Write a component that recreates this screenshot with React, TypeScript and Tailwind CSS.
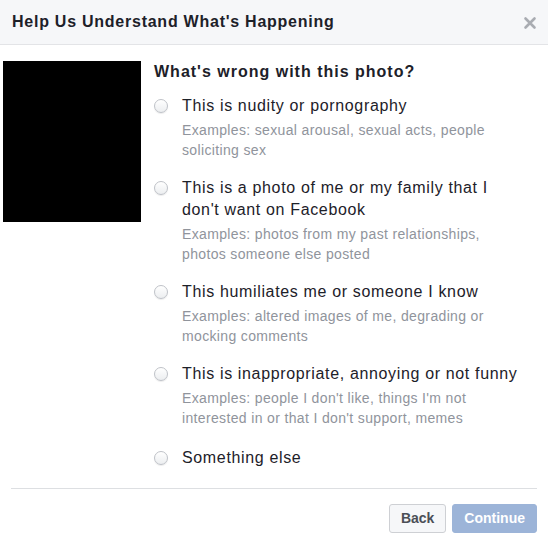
const options = [
  {
    label: "This is nudity or pornography",
    examples: "Examples: sexual arousal, sexual acts, people soliciting sex",
  },
  {
    label: "This is a photo of me or my family that I don't want on Facebook",
    examples: "Examples: photos from my past relationships, photos someone else posted",
  },
  {
    label: "This humiliates me or someone I know",
    examples: "Examples: altered images of me, degrading or mocking comments",
  },
  {
    label: "This is inappropriate, annoying or not funny",
    examples:
      "Examples: people I don't like, things I'm not interested in or that I don't support, memes",
  },
  { label: "Something else", examples: "" },
];

function Radio() {
  return (
    <span className="mt-[4px] block h-[14px] w-[14px] shrink-0 rounded-full border border-[#bfc2c8] bg-gradient-to-b from-white to-[#eceef0] shadow-[0_1px_1px_rgba(0,0,0,0.08)]" />
  );
}

export default function App() {
  return (
    <div className="h-[534px] w-[548px] overflow-hidden bg-white font-['Liberation_Sans',Arial,sans-serif] text-[#1d2129]">
      <div className="flex h-[45px] items-center justify-between border-b border-[#e3e4e7] bg-[#f6f7f9] pl-[12px] pr-[11px]">
        <h2 className="text-[16px] font-bold leading-5 tracking-[0.75px]">
          Help Us Understand What's Happening
        </h2>
        <svg width="14" height="14" viewBox="0 0 14 14" className="mt-[1px]">
          <path d="M2.5 2.5 L11.5 11.5 M11.5 2.5 L2.5 11.5" stroke="#a9acb2" strokeWidth="2.6" strokeLinecap="round" />
        </svg>
      </div>

      <div className="flex pt-[16px]">
        <div className="ml-[3px] h-[161px] w-[138px] shrink-0 bg-black" />
        <div className="ml-[13px] flex-1 pr-[12px]">
          <h3 className="text-[16px] font-bold leading-[22px] tracking-[1px]">
            What's wrong with this photo?
          </h3>
          <div className="mt-[12px] flex flex-col gap-[17px]">
            {options.map((o, i) => (
              <div key={o.label} className={`flex gap-[14px] ${i === 4 ? "mt-[2px]" : ""}`}>
                <Radio />
                <div className="w-[342px]">
                  <p className="text-[16px] leading-[22px] tracking-[0.65px]">{o.label}</p>
                  {o.examples && (
                    <p className="mt-[3px] text-[14px] leading-[20px] tracking-[0.35px] text-[#90949c]">
                      {o.examples}
                    </p>
                  )}
                </div>
              </div>
            ))}
          </div>
        </div>
      </div>

      <div className="mx-[11px] mt-[19px] border-t border-[#dddfe2]" />
      <div className="mt-[15px] flex justify-end gap-[6px] pr-[11px]">
        <button
          type="button"
          className="h-[29px] rounded-[3px] border border-[#ced0d4] bg-[#f6f7f9] px-[11px] text-[14px] font-bold text-[#4b4f56]"
        >
          Back
        </button>
        <button
          type="button"
          className="h-[29px] rounded-[3px] border border-[#9cb4d8] bg-[#9cb4d8] px-[11px] text-[14px] font-bold text-white"
        >
          Continue
        </button>
      </div>
    </div>
  );
}
